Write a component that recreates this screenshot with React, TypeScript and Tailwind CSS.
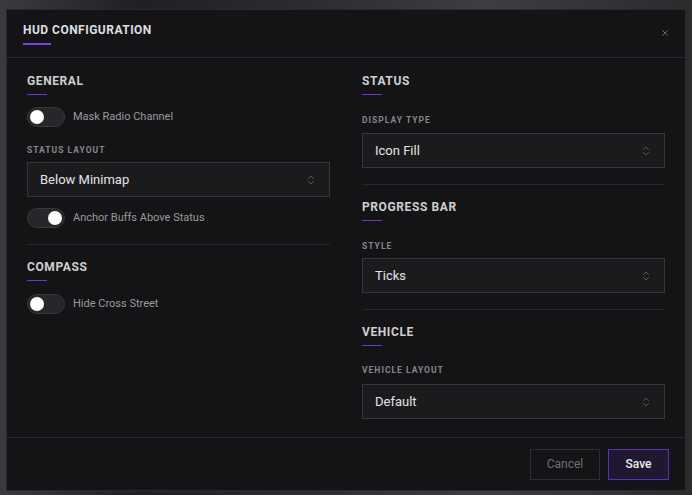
import React, { useState } from "react";
import { ChevronsUpDown, X } from "lucide-react";

const Toggle = ({ on, label }: { on: boolean; label: string }) => {
  return (
    <div className="flex flex-row items-center gap-2">
      <div className="relative w-[38px] h-[20px] rounded-full bg-[#27272a] border border-[#38383c] shrink-0">
        <div
          className={`absolute top-[2px] w-[14px] h-[14px] rounded-full bg-white ${
            on ? "left-[20px]" : "left-[2px]"
          }`}
        ></div>
      </div>
      <span className="text-[11px] leading-[14px] text-[#9a9a9e]">{label}</span>
    </div>
  );
};

const Heading = ({ title }: { title: string }) => {
  return (
    <div className="flex flex-col">
      <span className="text-[12px] leading-[16px] font-bold tracking-[0.05em] text-[#cfcfd2]">
        {title}
      </span>
      <div className="mt-[5px] w-[20px] h-px bg-[#6a34d6]"></div>
    </div>
  );
};

const Label = ({ text }: { text: string }) => {
  return (
    <div className="text-[8.5px] leading-[12px] font-bold tracking-[0.12em] text-[#86868a]">
      {text}
    </div>
  );
};

const Select = ({ value }: { value: string }) => {
  return (
    <div className="h-[35px] w-full flex flex-row items-center justify-between pl-[12px] pr-[12px] bg-[#1b1b1e] border border-[#36363a]">
      <span className="text-[13px] text-[#e4e4e6]">{value}</span>
      <ChevronsUpDown size={12} strokeWidth={1.5} className="text-[#6c6c70]" />
    </div>
  );
};

const Divider = () => <div className="w-full h-px bg-[#28282c]"></div>;

export default function App() {
  const [open] = useState(true);

  return (
    <div className="w-[692px] h-[495px] overflow-hidden bg-[#2a2b2d] bg-[linear-gradient(90deg,#3a3b3d_0%,#1f2022_20%,#2c2d2f_45%,#3d3e40_70%,#2a2b2d_100%)] pt-[9px] pl-[6px] font-['Roboto',sans-serif] leading-none">
      {open && (
        <div className="w-[680px] h-[482px] flex flex-col bg-[#141416] border border-[#2a2a2e]">
          {/* header */}
          <div className="h-[48px] shrink-0 flex flex-row justify-between items-start pl-[16px] pr-[15px] border-b border-[#2a2a2e]">
            <div className="flex flex-col pt-[12px]">
              <span className="text-[12px] leading-[16px] font-bold tracking-[0.04em] text-[#dedee0]">
                HUD CONFIGURATION
              </span>
              <div className="mt-[5px] w-[28px] h-[2px] bg-[#7b3ff0]"></div>
            </div>
            <X size={10} strokeWidth={1.75} className="text-[#8a8a8e] mt-[18px]" />
          </div>

          {/* body */}
          <div className="flex-1 grid grid-cols-2 gap-[32px] px-[20px] pt-[15px]">
            <div className="flex flex-col">
              <Heading title="GENERAL" />
              <div className="mt-[12px]">
                <Toggle on={false} label="Mask Radio Channel" />
              </div>
              <div className="mt-[17px]">
                <Label text="STATUS LAYOUT" />
              </div>
              <div className="mt-[6px]">
                <Select value="Below Minimap" />
              </div>
              <div className="mt-[11px]">
                <Toggle on={true} label="Anchor Buffs Above Status" />
              </div>
              <div className="mt-[16px]">
                <Divider />
              </div>
              <div className="mt-[14px]">
                <Heading title="COMPASS" />
              </div>
              <div className="mt-[13px]">
                <Toggle on={false} label="Hide Cross Street" />
              </div>
            </div>

            <div className="flex flex-col">
              <Heading title="STATUS" />
              <div className="mt-[19px]">
                <Label text="DISPLAY TYPE" />
              </div>
              <div className="mt-[7px]">
                <Select value="Icon Fill" />
              </div>
              <div className="mt-[16px]">
                <Divider />
              </div>
              <div className="mt-[14px]">
                <Heading title="PROGRESS BAR" />
              </div>
              <div className="mt-[19px]">
                <Label text="STYLE" />
              </div>
              <div className="mt-[6px]">
                <Select value="Ticks" />
              </div>
              <div className="mt-[16px]">
                <Divider />
              </div>
              <div className="mt-[14px]">
                <Heading title="VEHICLE" />
              </div>
              <div className="mt-[18px]">
                <Label text="VEHICLE LAYOUT" />
              </div>
              <div className="mt-[8px]">
                <Select value="Default" />
              </div>
            </div>
          </div>

          {/* footer */}
          <div className="h-[53px] shrink-0 flex flex-row justify-end items-center gap-[8px] pr-[16px] border-t border-[#2a2a2e]">
            <div className="w-[70px] h-[31px] flex items-center justify-center border border-[#2e2e32] text-[12px] text-[#6e6e72]">
              Cancel
            </div>
            <div className="w-[61px] h-[31px] flex items-center justify-center border border-[#5b2fbf] bg-[#1f1830] text-[12px] font-medium text-[#ececee]">
              Save
            </div>
          </div>
        </div>
      )}
    </div>
  );
}
